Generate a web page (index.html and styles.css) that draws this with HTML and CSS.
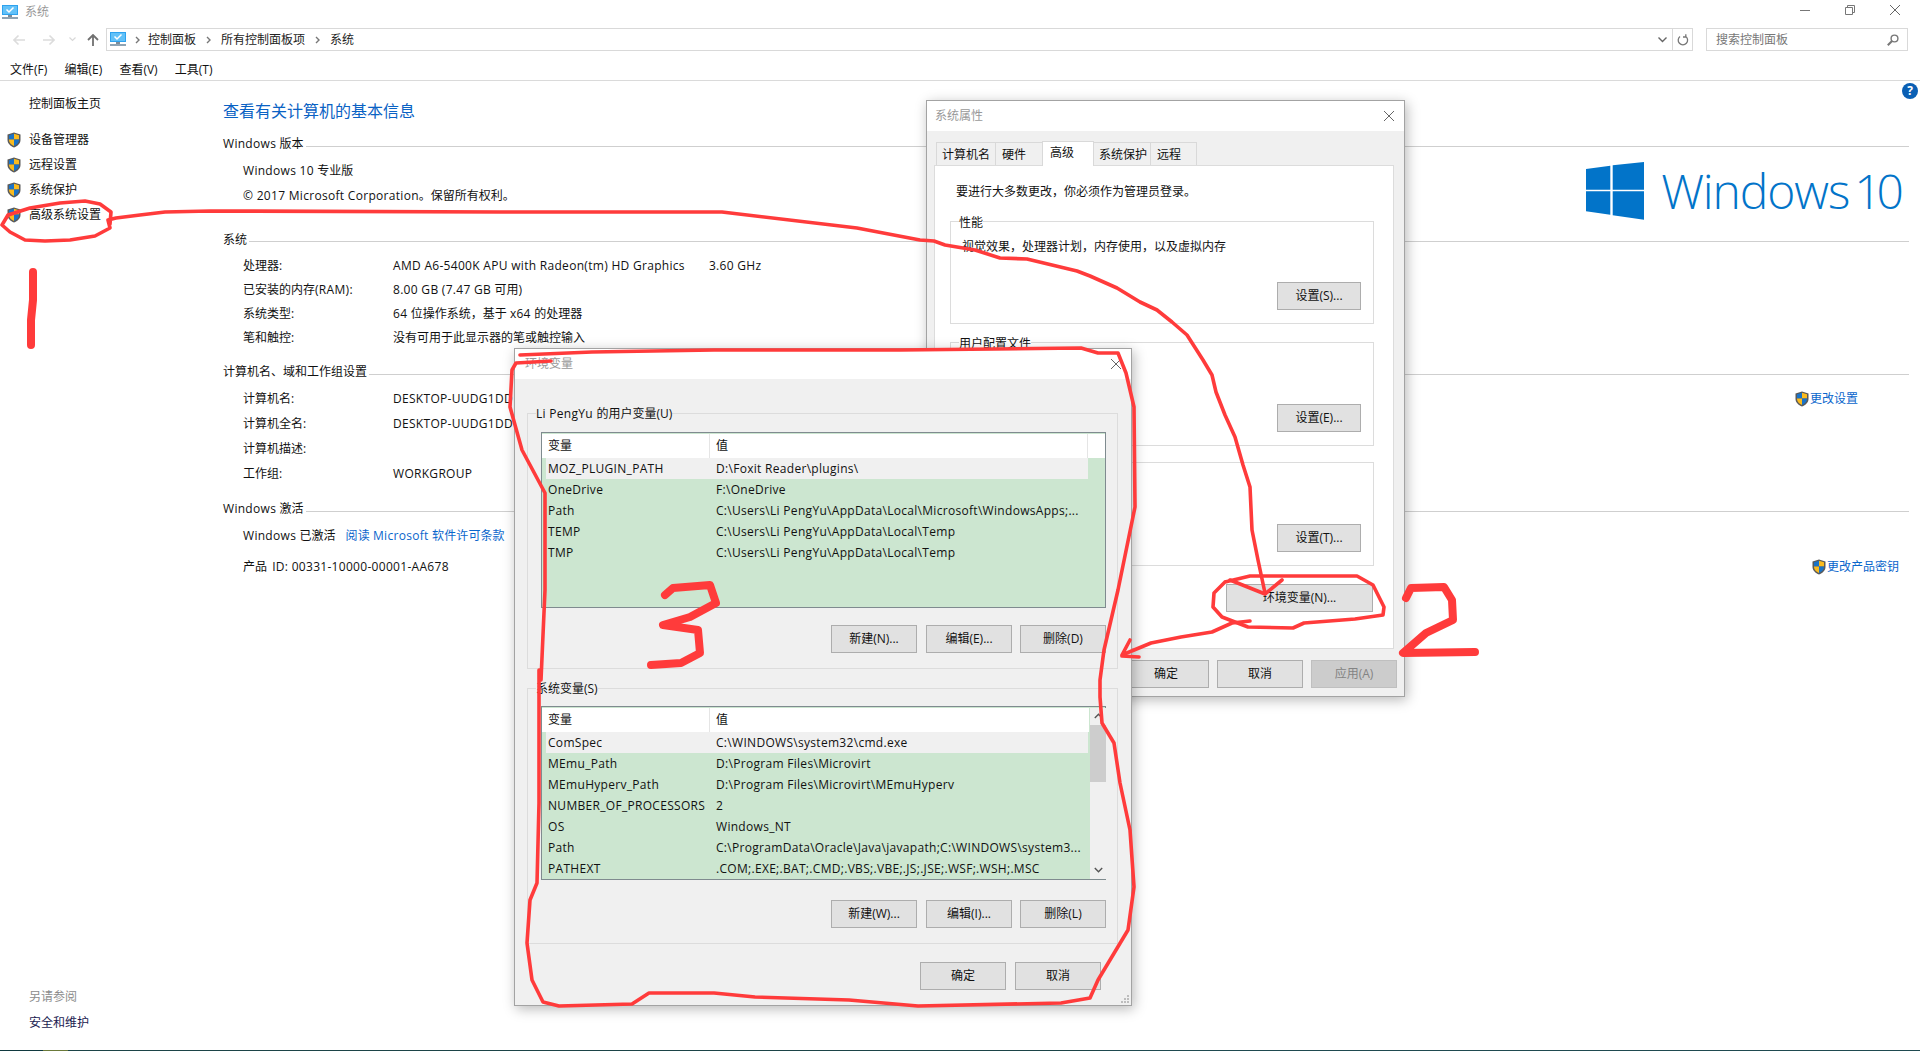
FILE: index.html
```html
<!DOCTYPE html>
<html lang="zh-CN">
<head>
<meta charset="utf-8">
<title>系统</title>
<link rel="stylesheet" href="styles.css">
</head>
<body>
<svg class="defs" width="0" height="0" aria-hidden="true">
  <symbol id="shield" viewBox="0 0 14 16">
    <path d="M7 .5 L13.5 2.5 V8 C13.5 11.5 10.5 14 7 15.5 C3.5 14 .5 11.5 .5 8 V2.5 Z" fill="#5a5a5a"/>
    <path d="M7 1.8 L2 3.3 V7.6 H7 Z" fill="#1a73c8"/>
    <path d="M7 1.8 L12 3.3 V7.6 H7 Z" fill="#fbbb1e"/>
    <path d="M2 7.6 H7 V14 C4.5 12.8 2 11 2 8 Z" fill="#fbbb1e"/>
    <path d="M12 7.6 H7 V14 C9.5 12.8 12 11 12 8 Z" fill="#1a73c8"/>
  </symbol>
  <symbol id="pc" viewBox="0 0 16 15">
    <rect x="0" y="0" width="16" height="10" fill="#2ea2ee"/>
    <rect x="1" y="1" width="14" height="8" fill="#62c1f8"/>
    <path d="M4.5 4.5 L7 7 L11.5 2.5" fill="none" stroke="#fff" stroke-width="1.5"/>
    <rect x="6" y="10" width="4" height="2" fill="#7d8c99"/>
    <rect x="0" y="12" width="16" height="2" fill="#8fa3b3"/>
  </symbol>
  <symbol id="x" viewBox="0 0 10 10">
    <path d="M0 0 L10 10 M10 0 L0 10" fill="none" stroke="#666" stroke-width="1"/>
  </symbol>
  <symbol id="crumb" viewBox="0 0 5 8">
    <path d="M1 1 L4 4 L1 7" fill="none" stroke="#777" stroke-width="1.4"/>
  </symbol>
</svg>

<div class="page">
  <div class="window">
    <header class="titlebar">
      <svg class="pc-icon"><use href="#pc"/></svg>
      <span class="title-text">系统</span>
      <div class="win-controls">
        <svg class="ctl" viewBox="0 0 10 10"><path d="M0 5.5 H10" fill="none" stroke="#777"/></svg>
        <svg class="ctl" viewBox="0 0 10 10"><path d="M2.5 2.5 V.5 H9.5 V7.5 H7.5 M.5 2.5 H7.5 V9.5 H.5 Z" fill="none" stroke="#777"/></svg>
        <svg class="ctl"><use href="#x"/></svg>
      </div>
    </header>

    <nav class="navbar">
      <div class="nav-buttons">
        <svg class="nav-arrow" viewBox="0 0 12 12"><path d="M12 6 H1 M5.5 1.5 L1 6 L5.5 10.5" fill="none" stroke="#dcdcdc" stroke-width="1.6"/></svg>
        <svg class="nav-arrow" viewBox="0 0 12 12"><path d="M0 6 H11 M6.5 1.5 L11 6 L6.5 10.5" fill="none" stroke="#dcdcdc" stroke-width="1.6"/></svg>
        <svg class="nav-mini" viewBox="0 0 7 5"><path d="M.5 .5 L3.5 3.5 L6.5 .5" fill="none" stroke="#d8d8d8" stroke-width="1.2"/></svg>
        <svg class="nav-arrow" viewBox="0 0 12 12"><path d="M6 12 V1 M1 6 L6 1 L11 6" fill="none" stroke="#707070" stroke-width="1.8"/></svg>
      </div>
      <div class="address">
        <svg class="pc-icon addr-icon"><use href="#pc"/></svg>
        <svg class="crumb crumb-first"><use href="#crumb"/></svg>
        <span>控制面板</span>
        <svg class="crumb"><use href="#crumb"/></svg>
        <span>所有控制面板项</span>
        <svg class="crumb"><use href="#crumb"/></svg>
        <span>系统</span>
        <div class="addr-tools">
          <svg class="addr-down" viewBox="0 0 9 6"><path d="M.5 .5 L4.5 4.5 L8.5 .5" fill="none" stroke="#666" stroke-width="1.4"/></svg>
          <div class="addr-refresh">
            <svg class="refresh" viewBox="0 0 12 12"><path d="M8.8 2.4 A4.7 4.7 0 1 1 3 2.4 M8.8 .2 V3 H6" fill="none" stroke="#777" stroke-width="1.3"/></svg>
          </div>
        </div>
      </div>
      <div class="search">
        <span>搜索控制面板</span>
        <svg class="search-icon" viewBox="0 0 12 12"><circle cx="7.5" cy="4.5" r="3.4" fill="none" stroke="#777" stroke-width="1.4"/><path d="M5 7 L.8 11.2" stroke="#777" stroke-width="2"/></svg>
      </div>
    </nav>

    <div class="menubar">
      <span>文件(F)</span><span>编辑(E)</span><span>查看(V)</span><span>工具(T)</span>
    </div>

    <div class="content">
      <aside class="sidebar">
        <div class="side-home">控制面板主页</div>
        <ul class="side-list">
          <li><svg class="shield"><use href="#shield"/></svg>设备管理器</li>
          <li><svg class="shield"><use href="#shield"/></svg>远程设置</li>
          <li><svg class="shield"><use href="#shield"/></svg>系统保护</li>
          <li><svg class="shield"><use href="#shield"/></svg>高级系统设置</li>
        </ul>
        <div class="side-foot">
          <div class="side-muted">另请参阅</div>
          <div class="side-link">安全和维护</div>
        </div>
      </aside>

      <main class="main">
        <h1 class="heading">查看有关计算机的基本信息</h1>

        <section class="sec sec-version">
          <h2 class="sec-title"><span><span class="lat">Windows </span>版本</span></h2>
          <div class="version-wrap">
            <div class="sec-rows">
              <div class="row row-25"><span><span class="lat">Windows 10 </span>专业版</span></div>
              <div class="row row-25"><span><span class="lat">© 2017 Microsoft Corporation</span>。保留所有权利。</span></div>
            </div>
            <div class="brand">
              <svg class="brand-logo" viewBox="0 0 58 58"><path d="M0 7 L24.3 3.7 V27.7 H0 Z M26.7 3.3 L58 0 V27.7 H26.7 Z M0 29.3 H24.3 V52.7 L0 49.3 Z M26.7 29.3 H58 V57.7 L26.7 53.3 Z" fill="#0274c9"/></svg>
              <span class="brand-text">Windows<span class="brand-num">10</span></span>
            </div>
          </div>
        </section>

        <section class="sec sec-system">
          <h2 class="sec-title">系统</h2>
          <div class="row"><span class="k">处理器:</span><span class="lat">AMD A6-5400K APU with Radeon(tm) HD Graphics<span class="ghz">3.60 GHz</span></span></div>
          <div class="row"><span class="k">已安装的内存<span class="lat">(RAM)</span>:</span><span><span class="lat">8.00 GB (7.47 GB </span>可用)</span></div>
          <div class="row"><span class="k">系统类型:</span><span><span class="lat">64 </span>位操作系统，基于 <span class="lat">x64 </span>的处理器</span></div>
          <div class="row"><span class="k">笔和触控:</span><span>没有可用于此显示器的笔或触控输入</span></div>
        </section>

        <section class="sec sec-computer">
          <h2 class="sec-title">计算机名、域和工作组设置</h2>
          <div class="row row-25"><span class="k">计算机名:</span><span class="lat">DESKTOP-UUDG1DD</span>
            <span class="action action-a"><svg class="shield"><use href="#shield"/></svg>更改设置</span></div>
          <div class="row row-25"><span class="k">计算机全名:</span><span class="lat">DESKTOP-UUDG1DD</span></div>
          <div class="row row-25"><span class="k">计算机描述:</span><span></span></div>
          <div class="row row-25"><span class="k">工作组:</span><span class="lat">WORKGROUP</span></div>
        </section>

        <section class="sec sec-activate">
          <h2 class="sec-title"><span><span class="lat">Windows </span>激活</span></h2>
          <div class="row"><span><span class="lat">Windows </span>已激活</span><a class="link">阅读 <span class="lat">Microsoft </span>软件许可条款</a></div>
          <div class="row row-id"><span>产品 <span class="lat id-val">ID: 00331-10000-00001-AA678</span></span>
            <span class="action action-b"><svg class="shield"><use href="#shield"/></svg>更改产品密钥</span></div>
        </section>
      </main>
    </div>
  </div>
  <div class="strip"><i class="s1"></i><i class="s2"></i><i class="s3"></i><i class="s4"></i></div>

  <svg class="help" viewBox="0 0 16 16"><circle cx="8" cy="8" r="8" fill="#0a5fb4"/><text x="8" y="12.3" class="help-q">?</text></svg>

  <!-- 系统属性 -->
  <div class="dialog dlg-sys">
    <div class="dlg-title"><span>系统属性</span><svg class="dlg-x"><use href="#x"/></svg></div>
    <div class="dlg-body">
      <div class="tabs">
        <span class="tab t1">计算机名</span><span class="tab t2">硬件</span><span class="tab t3 active">高级</span><span class="tab t4">系统保护</span><span class="tab t5">远程</span>
      </div>
      <div class="panel">
        <p class="panel-note">要进行大多数更改，你必须作为管理员登录。</p>
        <div class="group g1">
          <div class="legend">性能</div>
          <p class="g-text">视觉效果，处理器计划，内存使用，以及虚拟内存</p>
          <button class="btn g-btn btn-84">设置(S)...</button>
        </div>
        <div class="group g2">
          <div class="legend">用户配置文件</div>
          <button class="btn g-btn btn-84">设置(E)...</button>
        </div>
        <div class="group g3">
          <div class="legend">启动和故障恢复</div>
          <button class="btn g-btn btn-84">设置(T)...</button>
        </div>
        <div class="env-row"><button class="btn btn-env">环境变量(N)...</button></div>
      </div>
      <div class="sys-foot">
        <button class="btn btn-86">确定</button>
        <button class="btn btn-86">取消</button>
        <button class="btn btn-86 disabled">应用(A)</button>
      </div>
    </div>
  </div>

  <!-- 环境变量 -->
  <div class="dialog dlg-env">
    <div class="dlg-title env-head"><span class="env-title">环境变量</span><svg class="dlg-x"><use href="#x"/></svg></div>
    <div class="dlg-body env-body">
      <div class="vgroup v1">
        <div class="legend v-legend"><span class="lat">Li PengYu </span>的用户变量(U)</div>
        <div class="vlist l1">
          <div class="vhead"><span>变量</span><span>值</span><span></span></div>
          <div class="vrow sel"><span>MOZ_PLUGIN_PATH</span><span>D:\Foxit Reader\plugins\</span></div>
          <div class="vrow"><span>OneDrive</span><span>F:\OneDrive</span></div>
          <div class="vrow"><span>Path</span><span>C:\Users\Li PengYu\AppData\Local\Microsoft\WindowsApps;...</span></div>
          <div class="vrow"><span>TEMP</span><span>C:\Users\Li PengYu\AppData\Local\Temp</span></div>
          <div class="vrow"><span>TMP</span><span>C:\Users\Li PengYu\AppData\Local\Temp</span></div>
        </div>
        <div class="vbtns">
          <button class="btn btn-86">新建(N)...</button>
          <button class="btn btn-86">编辑(E)...</button>
          <button class="btn btn-86">删除(D)</button>
        </div>
      </div>
      <div class="vgroup v2">
        <div class="legend v-legend">系统变量(S)</div>
        <div class="vlist l2">
          <div class="vmain">
            <div class="vhead"><span>变量</span><span>值</span></div>
            <div class="vrow sel"><span>ComSpec</span><span>C:\WINDOWS\system32\cmd.exe</span></div>
            <div class="vrow"><span>MEmu_Path</span><span>D:\Program Files\Microvirt</span></div>
            <div class="vrow"><span>MEmuHyperv_Path</span><span>D:\Program Files\Microvirt\MEmuHyperv</span></div>
            <div class="vrow"><span>NUMBER_OF_PROCESSORS</span><span>2</span></div>
            <div class="vrow"><span>OS</span><span>Windows_NT</span></div>
            <div class="vrow"><span>Path</span><span>C:\ProgramData\Oracle\Java\javapath;C:\WINDOWS\system3...</span></div>
            <div class="vrow"><span>PATHEXT</span><span>.COM;.EXE;.BAT;.CMD;.VBS;.VBE;.JS;.JSE;.WSF;.WSH;.MSC</span></div>
          </div>
          <div class="scroll">
            <svg class="sb-arrow" viewBox="0 0 9 6"><path d="M.8 5 L4.5 1.2 L8.2 5" fill="none" stroke="#555" stroke-width="1.4"/></svg>
            <div class="thumb"></div>
            <svg class="sb-arrow sb-down" viewBox="0 0 9 6"><path d="M.8 1 L4.5 4.8 L8.2 1" fill="none" stroke="#555" stroke-width="1.4"/></svg>
          </div>
        </div>
        <div class="vbtns">
          <button class="btn btn-86">新建(W)...</button>
          <button class="btn btn-86">编辑(I)...</button>
          <button class="btn btn-86">删除(L)</button>
        </div>
      </div>
      <div class="env-foot">
        <button class="btn btn-86">确定</button>
        <button class="btn btn-86">取消</button>
      </div>
      <svg class="grip" viewBox="0 0 8 8"><path d="M6 0h2v2H6z M3 3h2v2H3z M6 3h2v2H6z M0 6h2v2H0z M3 6h2v2H3z M6 6h2v2H6z" fill="#bdbdbd"/></svg>
    </div>
  </div>

  <!-- 红色手写标注 -->
  <svg class="ink-layer" viewBox="0 0 1920 1051">
    <polyline class="ink" points="110,224 111,212 100,204 85,201 60,203 30,208 8,215 2,225 10,232 25,240 45,241 70,240 95,236 110,228 108,220 116,218 140,215 165,212 210,211 500,212 722,212 857,228 920,240 934,241 945,245 975,250 1000,258 1027,259 1077,271 1090,276 1117,288 1140,302 1157,310 1172,322 1187,335 1203,360 1212,375 1216,392 1225,415 1235,437 1243,465 1250,487 1252,530 1258,560 1265,593"/>
    <polyline class="ink" points="1230,580 1250,588 1265,594 1282,580"/>
    <polyline class="ink" points="1225,582 1250,576 1357,576 1373,585 1384,607 1383,615 1355,619 1304,623 1293,628 1248,627 1222,617 1213,607 1214,593 1225,582"/>
    <polyline class="ink" points="1250,621 1232,623 1212,632 1181,637 1151,643 1122,655 1130,640"/>
    <polyline class="ink" points="1122,656 1139,657"/>
    <polyline class="ink" points="520,355 592,352 714,350 900,350 1081,348 1098,353 1118,353 1126,373 1134,407 1135,507 1118,590 1104,650 1100,680 1100,697 1102,723 1114,743 1120,783 1130,830 1134,887 1128,930 1098,980 1090,998 1061,1003 918,1006 849,1000 755,997 714,993 649,993 632,1004 559,1006 543,1002 532,980 527,943 530,900 537,883 539,803 539,670 541,680 545,590 545,493 522,450 510,407 512,370 516,363 551,361"/>
    <polyline class="ink ink-fat" points="33,272 33,300 31,320 31,345"/>
    <polyline class="ink ink-fat" points="1406,598 1411,588 1444,587 1452,600 1453,620 1426,633 1403,653 1475,652"/>
    <polyline class="ink ink-fat" points="665,595 673,588 710,585 716,603 690,617 663,625 698,630 700,653 681,663 651,665"/>
  </svg>
</div>
</body>
</html>
```

FILE: styles.css
```css
* { box-sizing: border-box; }
html, body { margin: 0; padding: 0; }
body {
  width: 1920px;
  height: 1051px;
  overflow: hidden;
  background: #fff;
  color: #111;
  font-family: "Open Sans", "Noto Sans CJK SC", sans-serif;
  font-size: 12px;
  line-height: 20px;
}
.defs { position: absolute; }
svg { display: block; flex: none; }
.lat { letter-spacing: .3px; white-space: pre; }
.id-val { margin-left: 2px; }
.page { position: relative; width: 1920px; height: 1051px; display: flex; flex-direction: column; }
.window { flex: 1; display: flex; flex-direction: column; min-height: 0; }

/* title bar */
.titlebar { height: 28px; display: flex; align-items: flex-start; padding: 2px 20px 0 2px; }
.pc-icon { width: 16px; height: 15px; margin-top: 3px; }
.title-text { margin-left: 7px; color: #999; }
.win-controls { margin-left: auto; display: flex; gap: 35px; padding-top: 3px; }
.ctl { width: 10px; height: 10px; }

/* navigation */
.navbar { height: 23px; display: flex; align-items: stretch; }
.nav-buttons { width: 106px; display: flex; align-items: center; padding-left: 13px; }
.nav-arrow { width: 12px; height: 12px; margin-right: 18px; }
.nav-mini { width: 7px; height: 5px; margin: 0 11px 0 -4px; }
.address {
  width: 1587px; display: flex; align-items: center;
  border: 1px solid #d9d9d9; color: #222; padding-left: 3px;
}
.addr-icon { margin: 0; }
.crumb { width: 5px; height: 8px; margin: 0 10px; }
.crumb-first { margin: 0 8px 0 9px; }
.addr-tools { margin-left: auto; display: flex; align-items: center; height: 100%; }
.addr-down { width: 9px; height: 6px; margin-right: 5px; }
.addr-refresh { width: 20px; height: 100%; border-left: 1px solid #d9d9d9; display: flex; align-items: center; justify-content: center; }
.refresh { width: 12px; height: 12px; }
.search {
  width: 202px; margin-left: 13px; border: 1px solid #d9d9d9; color: #777;
  padding: 0 8px 0 9px; display: flex; align-items: center; justify-content: space-between;
}
.search-icon { width: 12px; height: 12px; }

/* menu */
.menubar { height: 30px; padding: 8px 0 0 10px; border-bottom: 1px solid #dadada; display: flex; gap: 17.2px; line-height: 22px; }

/* body */
.content { flex: 1; display: flex; min-height: 0; }
.sidebar { width: 223px; padding: 13px 0 17px 29px; display: flex; flex-direction: column; }
.side-list { list-style: none; margin: 16px 0 0; padding: 0; display: flex; flex-direction: column; gap: 5px; }
.side-list li { position: relative; display: flex; align-items: center; height: 20px; margin-left: -22px; gap: 8px; }
.shield { width: 14px; height: 16px; }
.side-foot { margin-top: auto; display: flex; flex-direction: column; gap: 6px; }
.side-muted { color: #8c8c8c; }
.side-link { color: #1a1a50; }

.main { flex: 1; padding: 18px 11px 0 0; min-width: 0; }
.heading { margin: 0; font-size: 16px; font-weight: 400; line-height: 24px; color: #0a62c4; }
.sec-title { margin: 0; font-size: 12px; font-weight: 400; line-height: 20px; display: flex; align-items: center; gap: 2px; }
.sec-title::after { content: ""; flex: 1; height: 1px; background: #cfcfcf; margin-top: 4px; }
.sec-system .sec-title::after { margin-top: 2px; }
.sec-version { margin-top: 11px; }
.version-wrap { display: flex; justify-content: space-between; height: 49px; margin-top: 4px; }
.sec-system { margin-top: 23px; }
.sec-computer { margin-top: 12px; }
.sec-activate { margin-top: 13px; }
.row { display: flex; align-items: center; height: 24px; padding-left: 20px; }
.row-25 { height: 25px; }
.sec-system .sec-title + .row, .sec-computer .sec-title + .row { margin-top: 4px; }
.sec-activate .sec-title + .row { margin-top: 5px; }
.row-id { margin-top: 7px; }
.k { width: 150px; flex: none; }
.ghz { margin-left: 24px; }
.link, .action { color: #0a66cc; }
.link { margin-left: 10px; letter-spacing: .1px; }
.action { margin-left: auto; display: flex; align-items: center; gap: 1px; }
.action-a { padding-right: 51px; }
.action-b { padding-right: 10px; }
.action .shield { width: 14px; height: 16px; }
.brand { display: flex; align-items: flex-start; gap: 17px; padding: 4px 10px 0 0; height: 62px; }
.brand-logo { width: 58px; height: 58px; }
.brand-text { color: #0274c9; font-size: 48px; font-weight: 300; line-height: 58px; white-space: nowrap; letter-spacing: -1.1px; }
.brand-num { margin-left: 5px; letter-spacing: -5px; }

.strip { height: 1px; display: flex; }
.strip i { display: block; height: 1px; }
.s1 { width: 43px; background: #10393f; }
.s2 { width: 25px; background: #6b7a3a; }
.s3 { width: 1032px; background: #1c4448; }
.s4 { flex: 1; background: #1f4a50; }

.help { position: absolute; left: 1902px; top: 83px; width: 16px; height: 16px; }
.help-q { fill: #fff; font-size: 12px; font-weight: 700; text-anchor: middle; font-family: "Open Sans", sans-serif; }

/* dialogs */
.dialog {
  position: absolute; display: flex; flex-direction: column;
  background: #f0f0f0; border: 1px solid #a3a3a3;
  box-shadow: 2px 3px 12px rgba(0,0,0,.28);
}
.dlg-sys { left: 926px; top: 100px; width: 479px; height: 597px; }
.dlg-env { left: 514px; top: 348px; width: 618px; height: 658px; }
.dlg-title { height: 30px; flex: none; background: #fff; display: flex; align-items: center; justify-content: space-between; padding: 0 10px 0 8px; color: #999; }
.env-head { padding-bottom: 1px; }
.dlg-x { width: 10px; height: 10px; }
.env-title { margin-left: 2px; }
.dlg-body { flex: 1; display: flex; flex-direction: column; min-height: 0; }
.btn {
  font: inherit; color: #111; height: 28px; padding: 0;
  background: #e1e1e1; border: 1px solid #adadad; border-radius: 0;
}
.btn-84 { width: 84px; }
.btn-86 { width: 86px; }
.btn-env { width: 147px; }
.disabled { background: #cccccc; border-color: #bfbfbf; color: #838383; }

/* tabs */
.tabs { display: flex; height: 34px; padding: 9px 0 0 9px; align-items: flex-end; }
.tab { height: 23px; background: #f0f0f0; border: 1px solid #d9d9d9; border-bottom: 0; padding-left: 5px; margin-left: -1px; line-height: 24px; color: #111; position: relative; }
.t1 { width: 60px; margin-left: 0; }
.t2 { width: 48px; padding-left: 6px; }
.t3 { width: 52px; height: 25px; background: #fff; padding-left: 7px; z-index: 1; margin-bottom: -1px; line-height: 22px; }
.t4 { width: 58px; }
.t5 { width: 47px; padding-left: 6px; }
.panel { width: 460px; height: 484px; margin-left: 7px; background: #fff; border: 1px solid #dcdcdc; padding: 16px 20px 0 15px; flex: none; }
.panel-note { margin: 0 0 0 6px; height: 20px; }
.group { border: 1px solid #dcdcdc; display: flex; flex-direction: column; width: 424px; }
.legend { width: fit-content; margin: -9px 0 0 8px; background: #fff; height: 20px; }
.g1 { margin-top: 19px; height: 103px; }
.g2 { margin-top: 18px; height: 104px; }
.g3 { margin-top: 16px; height: 104px; }
.g-text { margin: 4px 0 0 11px; }
.g-btn { margin: auto 12px 13px auto; }
.env-row { display: flex; justify-content: flex-end; margin-top: 18px; }
.sys-foot { display: flex; justify-content: flex-end; gap: 8px; margin: 11px 7px 0 0; }

/* env vars */
.env-body { padding: 34px 12px 0 12px; position: relative; }
.vgroup { border: 1px solid #dcdcdc; width: 591px; display: flex; flex-direction: column; padding: 0 11px 0 13px; }
.v1 { height: 256px; }
.v2 { height: 256px; margin-top: 19px; }
.v-legend { background: #f0f0f0; margin: -10px 0 0 -5px; }
.vlist { margin-top: 8px; background: #cce6d0; border: 1px solid #7f8b8f; padding-top: 1px; flex: none; }
.l1 { height: 176px; }
.l2 { height: 174px; margin-top: 7px; display: flex; align-items: stretch; }
.vmain { width: 547px; flex: none; }
.vhead { height: 24px; background: #fff; display: grid; grid-template-columns: 168px 378px 1fr; line-height: 24px; }
.vhead span { padding-left: 6px; border-right: 1px solid #e5e5e5; }
.vhead span:last-child { border-right: 0; }
.l2 .vhead { grid-template-columns: 168px 1fr; }
.vrow { height: 21px; line-height: 21px; margin-left: 4px; width: 542px; display: grid; grid-template-columns: 164px 378px; white-space: nowrap; letter-spacing: .3px; }
.vrow span:first-child { padding-left: 2px; }
.vrow span:last-child { padding-left: 6px; }
.sel { background: #f0f0f0; }
.scroll { width: 16px; margin-left: 1px; background: #f0f0f0; display: flex; flex-direction: column; align-items: center; }
.sb-arrow { width: 9px; height: 6px; margin: 5px 0 6px; }
.thumb { width: 16px; height: 57px; background: #cdcdcd; }
.sb-down { margin: auto 0 6px; }
.vbtns { display: flex; justify-content: flex-end; gap: 8px; margin-top: 17px; }
.v2 .vbtns { margin-top: 20px; }
.vbtns .btn:first-child { margin-right: 1px; }
.env-foot { display: flex; justify-content: flex-end; gap: 9px; margin: 18px 18px 0 0; }
.grip { position: absolute; right: 2px; bottom: 2px; width: 8px; height: 8px; }

/* ink overlay */
.ink-layer { position: absolute; left: 0; top: 0; width: 1920px; height: 1051px; pointer-events: none; }
.ink { fill: none; stroke: #ff3b3b; stroke-width: 3.6; stroke-linejoin: round; stroke-linecap: round; }
.ink-fat { stroke-width: 8; }
```
